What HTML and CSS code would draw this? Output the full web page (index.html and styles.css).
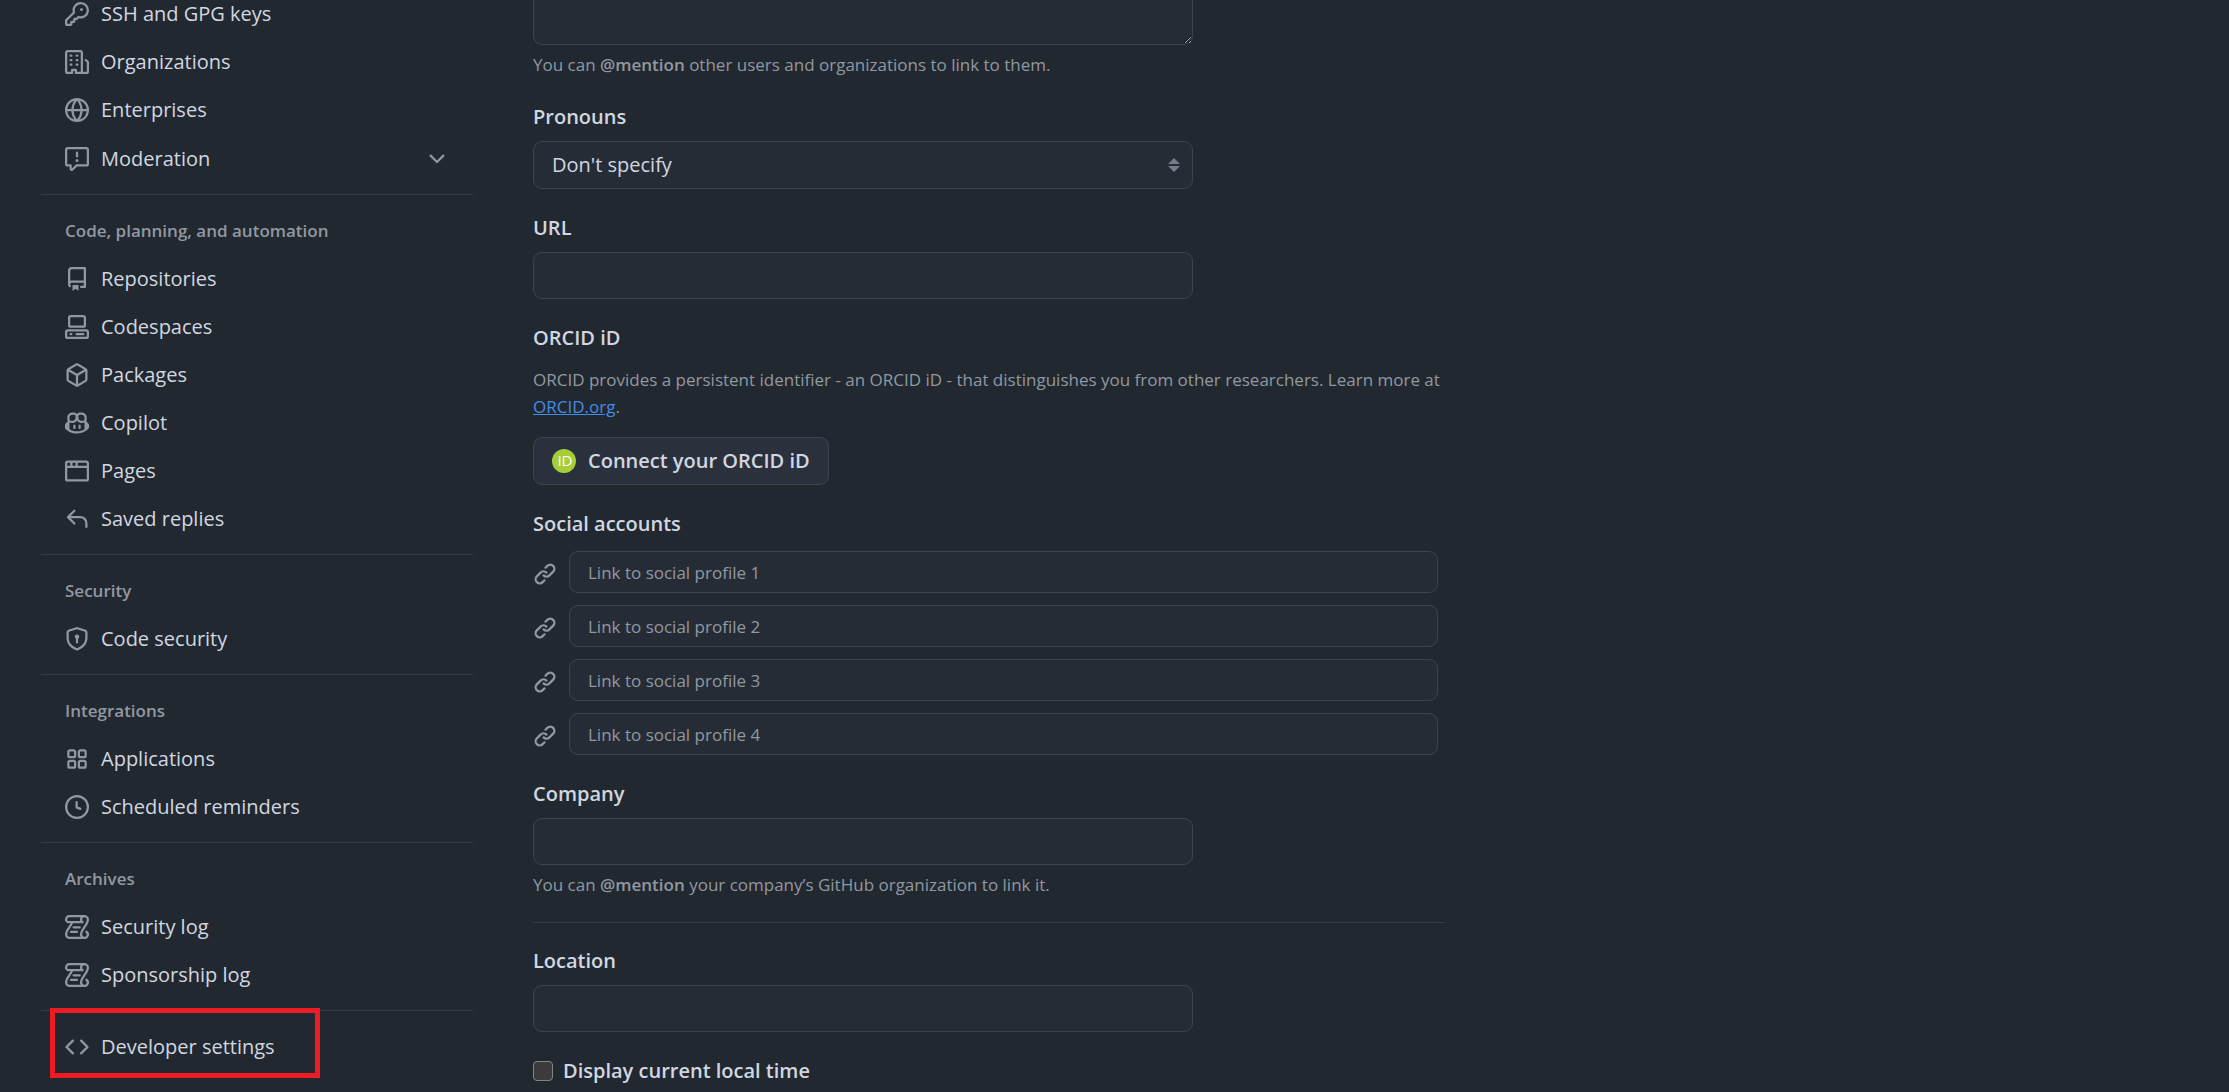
FILE: index.html
```html
<!DOCTYPE html>
<html lang="en">
<head>
<meta charset="utf-8">
<title>Public profile</title>
<meta name="viewport" content="width=device-width, initial-scale=1">
<link rel="stylesheet" href="styles.css">
</head>
<body>
<div class="page">
  <nav class="sidebar" aria-label="Settings">
    <ul class="nav-list">
      <li><a class="nav-item" href="#keys"><svg class="icon" viewBox="0 0 16 16" aria-hidden="true"><path d="M10.5 0a5.499 5.499 0 1 1-1.288 10.848l-.932.932a.749.749 0 0 1-.53.22H7v.75a.749.749 0 0 1-.22.53l-.5.5a.749.749 0 0 1-.53.22H5v.75a.749.749 0 0 1-.22.53l-.5.5a.749.749 0 0 1-.53.22h-2A1.75 1.75 0 0 1 0 14.25v-2c0-.199.079-.389.22-.53l4.932-4.932A5.5 5.5 0 0 1 10.5 0Zm-4 5.5c-.001.431.069.86.205 1.269a.75.75 0 0 1-.181.768L1.5 12.56v1.69c0 .138.112.25.25.25h1.69l.06-.06v-1.19a.75.75 0 0 1 .75-.75h1.19l.06-.06v-1.19a.75.75 0 0 1 .75-.75h1.19l1.023-1.025a.75.75 0 0 1 .768-.18A4 4 0 1 0 6.5 5.5ZM11 6a1 1 0 1 1 0-2 1 1 0 0 1 0 2Z"/></svg>SSH and GPG keys</a></li>
      <li><a class="nav-item" href="#organizations"><svg class="icon" viewBox="0 0 16 16" aria-hidden="true"><path d="M1.75 16A1.75 1.75 0 0 1 0 14.25V1.75C0 .784.784 0 1.75 0h8.5C11.216 0 12 .784 12 1.75v12.5c0 .085-.006.168-.018.25h2.268a.25.25 0 0 0 .25-.25V8.285a.25.25 0 0 0-.111-.208l-1.055-.703a.749.749 0 1 1 .832-1.248l1.055.703c.487.325.779.871.779 1.456v5.965A1.75 1.75 0 0 1 14.25 16h-3.5a.766.766 0 0 1-.197-.026c-.099.017-.2.026-.303.026h-3a.75.75 0 0 1-.75-.75V14h-1v1.25a.75.75 0 0 1-.75.75Zm-.25-1.75c0 .138.112.25.25.25H4v-1.25a.75.75 0 0 1 .75-.75h2.5a.75.75 0 0 1 .75.75v1.25h2.25a.25.25 0 0 0 .25-.25V1.75a.25.25 0 0 0-.25-.25h-8.5a.25.25 0 0 0-.25.25ZM3.75 6h.5a.75.75 0 0 1 0 1.5h-.5a.75.75 0 0 1 0-1.5ZM3 3.75A.75.75 0 0 1 3.75 3h.5a.75.75 0 0 1 0 1.5h-.5A.75.75 0 0 1 3 3.75Zm4 3A.75.75 0 0 1 7.75 6h.5a.75.75 0 0 1 0 1.5h-.5A.75.75 0 0 1 7 6.75ZM7.75 3h.5a.75.75 0 0 1 0 1.5h-.5a.75.75 0 0 1 0-1.5ZM3 9.75A.75.75 0 0 1 3.75 9h.5a.75.75 0 0 1 0 1.5h-.5A.75.75 0 0 1 3 9.75ZM7.75 9h.5a.75.75 0 0 1 0 1.5h-.5a.75.75 0 0 1 0-1.5Z"/></svg>Organizations</a></li>
      <li><a class="nav-item" href="#enterprises"><svg class="icon" viewBox="0 0 16 16" aria-hidden="true"><path d="M8 0a8 8 0 1 1 0 16A8 8 0 0 1 8 0ZM5.78 8.75a9.64 9.64 0 0 0 1.363 4.177c.255.426.542.832.857 1.215.245-.296.551-.705.857-1.215A9.64 9.64 0 0 0 10.22 8.75Zm4.44-1.5a9.64 9.64 0 0 0-1.363-4.177c-.307-.51-.612-.919-.857-1.215a9.927 9.927 0 0 0-.857 1.215A9.64 9.64 0 0 0 5.78 7.25Zm-5.944 1.5H1.543a6.507 6.507 0 0 0 4.666 5.5c-.123-.181-.24-.365-.352-.552-.715-1.192-1.437-2.874-1.581-4.948Zm-2.733-1.5h2.733c.144-2.074.866-3.756 1.58-4.948.12-.197.237-.381.353-.552a6.507 6.507 0 0 0-4.666 5.5Zm10.181 1.5c-.144 2.074-.866 3.756-1.58 4.948-.12.197-.237.381-.353.552a6.507 6.507 0 0 0 4.666-5.5Zm2.733-1.5a6.507 6.507 0 0 0-4.666-5.5c.123.181.24.365.353.552.714 1.192 1.436 2.874 1.58 4.948Z"/></svg>Enterprises</a></li>
      <li><button class="nav-item nav-toggle" type="button" aria-expanded="false"><svg class="icon" viewBox="0 0 16 16" aria-hidden="true"><path d="M0 1.75C0 .784.784 0 1.75 0h12.5C15.216 0 16 .784 16 1.75v9.5A1.75 1.75 0 0 1 14.25 13H8.06l-2.573 2.573A1.458 1.458 0 0 1 3 14.543V13H1.75A1.75 1.75 0 0 1 0 11.25Zm1.75-.25a.25.25 0 0 0-.25.25v9.5c0 .138.112.25.25.25h2a.75.75 0 0 1 .75.75v2.19l2.72-2.72a.749.749 0 0 1 .53-.22h6.5a.25.25 0 0 0 .25-.25v-9.5a.25.25 0 0 0-.25-.25Zm7 2.25v2.5a.75.75 0 0 1-1.5 0v-2.5a.75.75 0 0 1 1.5 0ZM9 9a1 1 0 1 1-2 0 1 1 0 0 1 2 0Z"/></svg>Moderation<svg class="icon chevron" viewBox="0 0 16 16" aria-hidden="true"><path d="M12.78 5.22a.749.749 0 0 1 0 1.06l-4.25 4.25a.749.749 0 0 1-1.06 0L3.22 6.28a.749.749 0 1 1 1.06-1.06L8 8.939l3.72-3.719a.749.749 0 0 1 1.06 0Z"/></svg></button></li>
    </ul>

    <section class="nav-group">
      <h2 class="nav-heading">Code, planning, and automation</h2>
      <ul class="nav-list">
        <li><a class="nav-item" href="#repositories"><svg class="icon" viewBox="0 0 16 16" aria-hidden="true"><path d="M2 2.5A2.5 2.5 0 0 1 4.5 0h8.75a.75.75 0 0 1 .75.75v12.5a.75.75 0 0 1-.75.75h-2.5a.75.75 0 0 1 0-1.5h1.75v-2h-8a1 1 0 0 0-.714 1.7.75.75 0 1 1-1.072 1.05A2.495 2.495 0 0 1 2 11.5Zm10.5-1h-8a1 1 0 0 0-1 1v6.708A2.486 2.486 0 0 1 4.5 9h8ZM5 12.25a.25.25 0 0 1 .25-.25h3.5a.25.25 0 0 1 .25.25v3.25a.25.25 0 0 1-.4.2l-1.45-1.087a.249.249 0 0 0-.3 0L5.4 15.7a.25.25 0 0 1-.4-.2Z"/></svg>Repositories</a></li>
        <li><a class="nav-item" href="#codespaces"><svg class="icon" viewBox="0 0 16 16" aria-hidden="true"><path d="M0 11.25c0-.966.784-1.75 1.75-1.75h12.5c.966 0 1.75.784 1.75 1.75v3A1.75 1.75 0 0 1 14.25 16H1.75A1.75 1.75 0 0 1 0 14.25Zm2-9.5C2 .784 2.784 0 3.75 0h8.5C13.216 0 14 .784 14 1.75v5a1.75 1.75 0 0 1-1.75 1.75h-8.5A1.75 1.75 0 0 1 2 6.75Zm1.75-.25a.25.25 0 0 0-.25.25v5c0 .138.112.25.25.25h8.5a.25.25 0 0 0 .25-.25v-5a.25.25 0 0 0-.25-.25Zm-2 9.5a.25.25 0 0 0-.25.25v3c0 .138.112.25.25.25h12.5a.25.25 0 0 0 .25-.25v-3a.25.25 0 0 0-.25-.25Z"/><path d="M7 12.75a.75.75 0 0 1 .75-.75h4.5a.75.75 0 0 1 0 1.5h-4.5a.75.75 0 0 1-.75-.75Zm-4 0a.75.75 0 0 1 .75-.75h.5a.75.75 0 0 1 0 1.5h-.5a.75.75 0 0 1-.75-.75Z"/></svg>Codespaces</a></li>
        <li><a class="nav-item" href="#packages"><svg class="icon" viewBox="0 0 16 16" aria-hidden="true"><path d="m8.878.392 5.25 3.045c.54.314.872.89.872 1.514v6.098a1.75 1.75 0 0 1-.872 1.514l-5.25 3.045a1.75 1.75 0 0 1-1.756 0l-5.25-3.045A1.75 1.75 0 0 1 1 11.049V4.951c0-.624.332-1.201.872-1.514L7.122.392a1.75 1.75 0 0 1 1.756 0ZM7.875 1.69l-4.63 2.685L8 7.133l4.755-2.758-4.63-2.685a.248.248 0 0 0-.25 0ZM2.5 5.677v5.372c0 .09.047.171.125.216l4.625 2.683V8.432Zm6.25 8.271 4.625-2.683a.25.25 0 0 0 .125-.216V5.677L8.75 8.432Z"/></svg>Packages</a></li>
        <li><a class="nav-item" href="#copilot"><svg class="icon" viewBox="0 0 16 16" aria-hidden="true"><path d="M7.998 15.035c-4.562 0-7.873-2.914-7.998-3.749V9.338c.085-.628.677-1.686 1.588-2.065.013-.07.024-.143.036-.218.029-.183.06-.384.126-.612-.201-.508-.254-1.084-.254-1.656 0-.87.128-1.769.693-2.484.579-.733 1.494-1.124 2.724-1.261 1.206-.134 2.262.034 2.944.765.05.053.096.108.139.165.044-.057.094-.112.143-.165.682-.731 1.738-.899 2.944-.765 1.23.137 2.145.528 2.724 1.261.566.715.693 1.614.693 2.484 0 .572-.053 1.148-.254 1.656.066.228.098.429.126.612.012.076.024.148.037.218.924.385 1.522 1.471 1.591 2.095v1.872c0 .766-3.351 3.795-8.002 3.795Zm0-1.485c2.28 0 4.584-1.11 5.002-1.433V7.862l-.023-.116c-.49.21-1.075.291-1.727.291-1.146 0-2.059-.327-2.71-.991A3.222 3.222 0 0 1 8 6.303a3.24 3.24 0 0 1-.544.743c-.65.664-1.563.991-2.71.991-.652 0-1.236-.081-1.727-.291l-.023.116v4.255c.419.323 2.722 1.433 5.002 1.433ZM6.762 2.83c-.193-.206-.637-.413-1.682-.297-1.019.113-1.479.404-1.713.7-.247.312-.369.789-.369 1.554 0 .793.129 1.171.308 1.371.162.181.519.379 1.442.379.853 0 1.339-.235 1.638-.54.315-.322.527-.827.617-1.553.117-.935-.037-1.395-.241-1.614Zm4.155-.297c-1.044-.116-1.488.091-1.681.297-.204.219-.359.679-.242 1.614.091.726.303 1.231.618 1.553.299.305.784.54 1.638.54.922 0 1.28-.198 1.442-.379.179-.2.308-.578.308-1.371 0-.765-.123-1.242-.37-1.554-.233-.296-.693-.587-1.713-.7Z"/><path d="M6.25 9.037a.75.75 0 0 1 .75.75v1.501a.75.75 0 0 1-1.5 0V9.787a.75.75 0 0 1 .75-.75Zm4.25.75v1.501a.75.75 0 0 1-1.5 0V9.787a.75.75 0 0 1 1.5 0Z"/></svg>Copilot</a></li>
        <li><a class="nav-item" href="#pages"><svg class="icon" viewBox="0 0 16 16" aria-hidden="true"><path d="M0 2.75C0 1.784.784 1 1.75 1h12.5c.966 0 1.75.784 1.75 1.75v10.5A1.75 1.75 0 0 1 14.25 15H1.75A1.75 1.75 0 0 1 0 13.25ZM14.5 6h-13v7.25c0 .138.112.25.25.25h12.5a.25.25 0 0 0 .25-.25Zm-6-3.5v2h6V2.75a.25.25 0 0 0-.25-.25ZM5 2.5v2h2v-2Zm-3.25 0a.25.25 0 0 0-.25.25V4.5h2v-2Z"/></svg>Pages</a></li>
        <li><a class="nav-item" href="#replies"><svg class="icon" viewBox="0 0 16 16" aria-hidden="true"><path d="M6.78 1.97a.75.75 0 0 1 0 1.06L3.81 6h6.44A4.75 4.75 0 0 1 15 10.75v2.5a.75.75 0 0 1-1.5 0v-2.5a3.25 3.25 0 0 0-3.25-3.25H3.81l2.97 2.97a.749.749 0 0 1-.326 1.275.749.749 0 0 1-.734-.215L1.47 7.28a.75.75 0 0 1 0-1.06l4.25-4.25a.75.75 0 0 1 1.06 0Z"/></svg>Saved replies</a></li>
      </ul>
    </section>

    <section class="nav-group">
      <h2 class="nav-heading">Security</h2>
      <ul class="nav-list">
        <li><a class="nav-item" href="#security"><svg class="icon" viewBox="0 0 16 16" aria-hidden="true"><path d="m8.533.133 5.25 1.68A1.75 1.75 0 0 1 15 3.48V7c0 1.566-.32 3.182-1.303 4.682-.983 1.498-2.585 2.813-5.032 3.855a1.697 1.697 0 0 1-1.33 0c-2.447-1.042-4.049-2.357-5.032-3.855C1.32 10.182 1 8.566 1 7V3.48a1.755 1.755 0 0 1 1.217-1.667l5.25-1.68a1.748 1.748 0 0 1 1.066 0Zm-.61 1.429.001.001-5.25 1.68a.251.251 0 0 0-.174.237V7c0 1.36.275 2.666 1.057 3.859.784 1.194 2.121 2.342 4.366 3.298a.196.196 0 0 0 .154 0c2.245-.957 3.582-2.103 4.366-3.297C13.225 9.666 13.5 8.358 13.5 7V3.48a.25.25 0 0 0-.174-.238l-5.25-1.68a.25.25 0 0 0-.153 0ZM9.5 6.5c0 .536-.286 1.032-.75 1.3v2.45a.75.75 0 0 1-1.5 0V7.8A1.5 1.5 0 1 1 9.5 6.5Z"/></svg>Code security</a></li>
      </ul>
    </section>

    <section class="nav-group">
      <h2 class="nav-heading">Integrations</h2>
      <ul class="nav-list">
        <li><a class="nav-item" href="#applications"><svg class="icon" viewBox="0 0 16 16" aria-hidden="true"><path d="M1.5 3.25c0-.966.784-1.75 1.75-1.75h2.5c.966 0 1.75.784 1.75 1.75v2.5A1.75 1.75 0 0 1 5.75 7.5h-2.5A1.75 1.75 0 0 1 1.5 5.75Zm7 0c0-.966.784-1.75 1.75-1.75h2.5c.966 0 1.75.784 1.75 1.75v2.5a1.75 1.75 0 0 1-1.75 1.75h-2.5A1.75 1.75 0 0 1 8.5 5.75Zm-7 7c0-.966.784-1.75 1.75-1.75h2.5c.966 0 1.75.784 1.75 1.75v2.5a1.75 1.75 0 0 1-1.75 1.75h-2.5a1.75 1.75 0 0 1-1.75-1.75Zm7 0c0-.966.784-1.75 1.75-1.75h2.5c.966 0 1.75.784 1.75 1.75v2.5a1.75 1.75 0 0 1-1.75 1.75h-2.5a1.75 1.75 0 0 1-1.75-1.75ZM3.25 3a.25.25 0 0 0-.25.25v2.5c0 .138.112.25.25.25h2.5A.25.25 0 0 0 6 5.75v-2.5A.25.25 0 0 0 5.75 3Zm7 0a.25.25 0 0 0-.25.25v2.5c0 .138.112.25.25.25h2.5a.25.25 0 0 0 .25-.25v-2.5a.25.25 0 0 0-.25-.25Zm-7 7a.25.25 0 0 0-.25.25v2.5c0 .138.112.25.25.25h2.5a.25.25 0 0 0 .25-.25v-2.5a.25.25 0 0 0-.25-.25Zm7 0a.25.25 0 0 0-.25.25v2.5c0 .138.112.25.25.25h2.5a.25.25 0 0 0 .25-.25v-2.5a.25.25 0 0 0-.25-.25Z"/></svg>Applications</a></li>
        <li><a class="nav-item" href="#reminders"><svg class="icon" viewBox="0 0 16 16" aria-hidden="true"><path d="M8 0a8 8 0 1 1 0 16A8 8 0 0 1 8 0ZM1.5 8a6.5 6.5 0 1 0 13 0 6.5 6.5 0 0 0-13 0Zm7-3.25v2.992l2.028.812a.75.75 0 0 1-.557 1.392l-2.5-1A.751.751 0 0 1 7 8.25v-3.5a.75.75 0 0 1 1.5 0Z"/></svg>Scheduled reminders</a></li>
      </ul>
    </section>

    <section class="nav-group">
      <h2 class="nav-heading">Archives</h2>
      <ul class="nav-list">
        <li><a class="nav-item" href="#security-log"><svg class="icon" viewBox="0 0 16 16" aria-hidden="true"><path d="M5 8.25a.75.75 0 0 1 .75-.75h4a.75.75 0 0 1 0 1.5h-4A.75.75 0 0 1 5 8.25ZM4 10.5A.75.75 0 0 0 4 12h4a.75.75 0 0 0 0-1.5H4Z"/><path d="M13-.005c1.654 0 3 1.328 3 3 0 .982-.338 1.933-.783 2.818-.443.879-1.028 1.758-1.582 2.588l-.011.017c-.568.853-1.104 1.659-1.501 2.446-.398.789-.623 1.494-.623 2.136a1.5 1.5 0 1 0 2.333-1.248.75.75 0 0 1 .834-1.246A3 3 0 0 1 13 16H3a3 3 0 0 1-3-3c0-1.582.891-3.135 1.777-4.506.209-.322.418-.637.623-.946.473-.709.923-1.386 1.287-2.048H2.51c-.576 0-1.381-.133-1.907-.783A2.68 2.68 0 0 1 0 2.995a3 3 0 0 1 3-3Zm0 1.5a1.5 1.5 0 0 0-1.5 1.5c0 .476.223.834.667 1.132A.75.75 0 0 1 11.75 5.5H5.368c-.467 1.003-1.141 2.015-1.773 2.963-.192.289-.381.571-.558.845C2.13 10.711 1.5 11.916 1.5 13A1.5 1.5 0 0 0 3 14.5h7.401A2.989 2.989 0 0 1 10 13c0-.979.338-1.928.784-2.812.441-.874 1.023-1.748 1.575-2.576l.017-.026c.568-.853 1.103-1.658 1.501-2.448.398-.79.623-1.497.623-2.143 0-.838-.669-1.5-1.5-1.5Zm-10 0a1.5 1.5 0 0 0-1.5 1.5c0 .321.1.569.27.778.097.12.325.227.74.227h7.674A2.737 2.737 0 0 1 10 2.995c0-.546.146-1.059.401-1.5Z"/></svg>Security log</a></li>
        <li><a class="nav-item" href="#sponsorship-log"><svg class="icon" viewBox="0 0 16 16" aria-hidden="true"><path d="M5 8.25a.75.75 0 0 1 .75-.75h4a.75.75 0 0 1 0 1.5h-4A.75.75 0 0 1 5 8.25ZM4 10.5A.75.75 0 0 0 4 12h4a.75.75 0 0 0 0-1.5H4Z"/><path d="M13-.005c1.654 0 3 1.328 3 3 0 .982-.338 1.933-.783 2.818-.443.879-1.028 1.758-1.582 2.588l-.011.017c-.568.853-1.104 1.659-1.501 2.446-.398.789-.623 1.494-.623 2.136a1.5 1.5 0 1 0 2.333-1.248.75.75 0 0 1 .834-1.246A3 3 0 0 1 13 16H3a3 3 0 0 1-3-3c0-1.582.891-3.135 1.777-4.506.209-.322.418-.637.623-.946.473-.709.923-1.386 1.287-2.048H2.51c-.576 0-1.381-.133-1.907-.783A2.68 2.68 0 0 1 0 2.995a3 3 0 0 1 3-3Zm0 1.5a1.5 1.5 0 0 0-1.5 1.5c0 .476.223.834.667 1.132A.75.75 0 0 1 11.75 5.5H5.368c-.467 1.003-1.141 2.015-1.773 2.963-.192.289-.381.571-.558.845C2.13 10.711 1.5 11.916 1.5 13A1.5 1.5 0 0 0 3 14.5h7.401A2.989 2.989 0 0 1 10 13c0-.979.338-1.928.784-2.812.441-.874 1.023-1.748 1.575-2.576l.017-.026c.568-.853 1.103-1.658 1.501-2.448.398-.79.623-1.497.623-2.143 0-.838-.669-1.5-1.5-1.5Zm-10 0a1.5 1.5 0 0 0-1.5 1.5c0 .321.1.569.27.778.097.12.325.227.74.227h7.674A2.737 2.737 0 0 1 10 2.995c0-.546.146-1.059.401-1.5Z"/></svg>Sponsorship log</a></li>
      </ul>
    </section>

    <section class="nav-group nav-group-plain">
      <ul class="nav-list">
        <li class="highlighted"><a class="nav-item" href="#developer"><svg class="icon" viewBox="0 0 16 16" aria-hidden="true"><path d="m11.28 3.22 4.25 4.25a.75.75 0 0 1 0 1.06l-4.25 4.25a.749.749 0 0 1-1.275-.326.749.749 0 0 1 .215-.734L13.94 8l-3.72-3.72a.749.749 0 0 1 .326-1.275.749.749 0 0 1 .734.215Zm-6.56 0a.751.751 0 0 1 1.042.018.751.751 0 0 1 .018 1.042L2.06 8l3.72 3.72a.749.749 0 0 1-.326 1.275.749.749 0 0 1-.734-.215L.47 8.53a.75.75 0 0 1 0-1.06Z"/></svg>Developer settings</a></li>
      </ul>
    </section>
  </nav>

  <main class="content">
    <form class="profile-form">
      <div class="field">
        <textarea class="control bio" aria-label="Bio"></textarea>
        <p class="note">You can <strong>@mention</strong> other users and organizations to link to them.</p>
      </div>

      <div class="field">
        <label class="label" for="pronouns">Pronouns</label>
        <select class="control select" id="pronouns"><option>Don't specify</option></select>
      </div>

      <div class="field">
        <label class="label" for="url">URL</label>
        <input class="control" type="url" id="url">
      </div>

      <div class="field">
        <h2 class="label">ORCID iD</h2>
        <p class="description">ORCID provides a persistent identifier - an ORCID iD - that distinguishes you from other researchers. Learn more at <a class="link" href="#orcid">ORCID.org</a>.</p>
        <button class="button" type="button"><svg class="icon" viewBox="0 0 24 24" aria-hidden="true"><circle cx="12" cy="12" r="12" fill="#a6ce39"/><text class="orcid-mark" x="13" y="17" text-anchor="middle">iD</text></svg>Connect your ORCID iD</button>
      </div>

      <div class="field">
        <h2 class="label">Social accounts</h2>
        <ul class="social-list">
          <li class="social-row"><svg class="icon" viewBox="0 0 16 16" aria-hidden="true"><path d="m7.775 3.275 1.25-1.25a3.5 3.5 0 1 1 4.95 4.95l-2.5 2.5a3.5 3.5 0 0 1-4.95 0 .751.751 0 0 1 .018-1.042.751.751 0 0 1 1.042-.018 1.998 1.998 0 0 0 2.83 0l2.5-2.5a2.002 2.002 0 0 0-2.83-2.83l-1.25 1.25a.751.751 0 0 1-1.042-.018.751.751 0 0 1-.018-1.042Zm-4.69 9.64a1.998 1.998 0 0 0 2.83 0l1.25-1.25a.751.751 0 0 1 1.042.018.751.751 0 0 1 .018 1.042l-1.25 1.25a3.5 3.5 0 1 1-4.95-4.95l2.5-2.5a3.5 3.5 0 0 1 4.95 0 .751.751 0 0 1-.018 1.042.751.751 0 0 1-1.042.018 1.998 1.998 0 0 0-2.83 0l-2.5 2.5a1.998 1.998 0 0 0 0 2.83Z"/></svg><input class="control control-small" type="text" placeholder="Link to social profile 1" aria-label="Link to social profile 1"></li>
          <li class="social-row"><svg class="icon" viewBox="0 0 16 16" aria-hidden="true"><path d="m7.775 3.275 1.25-1.25a3.5 3.5 0 1 1 4.95 4.95l-2.5 2.5a3.5 3.5 0 0 1-4.95 0 .751.751 0 0 1 .018-1.042.751.751 0 0 1 1.042-.018 1.998 1.998 0 0 0 2.83 0l2.5-2.5a2.002 2.002 0 0 0-2.83-2.83l-1.25 1.25a.751.751 0 0 1-1.042-.018.751.751 0 0 1-.018-1.042Zm-4.69 9.64a1.998 1.998 0 0 0 2.83 0l1.25-1.25a.751.751 0 0 1 1.042.018.751.751 0 0 1 .018 1.042l-1.25 1.25a3.5 3.5 0 1 1-4.95-4.95l2.5-2.5a3.5 3.5 0 0 1 4.95 0 .751.751 0 0 1-.018 1.042.751.751 0 0 1-1.042.018 1.998 1.998 0 0 0-2.83 0l-2.5 2.5a1.998 1.998 0 0 0 0 2.83Z"/></svg><input class="control control-small" type="text" placeholder="Link to social profile 2" aria-label="Link to social profile 2"></li>
          <li class="social-row"><svg class="icon" viewBox="0 0 16 16" aria-hidden="true"><path d="m7.775 3.275 1.25-1.25a3.5 3.5 0 1 1 4.95 4.95l-2.5 2.5a3.5 3.5 0 0 1-4.95 0 .751.751 0 0 1 .018-1.042.751.751 0 0 1 1.042-.018 1.998 1.998 0 0 0 2.83 0l2.5-2.5a2.002 2.002 0 0 0-2.83-2.83l-1.25 1.25a.751.751 0 0 1-1.042-.018.751.751 0 0 1-.018-1.042Zm-4.69 9.64a1.998 1.998 0 0 0 2.83 0l1.25-1.25a.751.751 0 0 1 1.042.018.751.751 0 0 1 .018 1.042l-1.25 1.25a3.5 3.5 0 1 1-4.95-4.95l2.5-2.5a3.5 3.5 0 0 1 4.95 0 .751.751 0 0 1-.018 1.042.751.751 0 0 1-1.042.018 1.998 1.998 0 0 0-2.83 0l-2.5 2.5a1.998 1.998 0 0 0 0 2.83Z"/></svg><input class="control control-small" type="text" placeholder="Link to social profile 3" aria-label="Link to social profile 3"></li>
          <li class="social-row"><svg class="icon" viewBox="0 0 16 16" aria-hidden="true"><path d="m7.775 3.275 1.25-1.25a3.5 3.5 0 1 1 4.95 4.95l-2.5 2.5a3.5 3.5 0 0 1-4.95 0 .751.751 0 0 1 .018-1.042.751.751 0 0 1 1.042-.018 1.998 1.998 0 0 0 2.83 0l2.5-2.5a2.002 2.002 0 0 0-2.83-2.83l-1.25 1.25a.751.751 0 0 1-1.042-.018.751.751 0 0 1-.018-1.042Zm-4.69 9.64a1.998 1.998 0 0 0 2.83 0l1.25-1.25a.751.751 0 0 1 1.042.018.751.751 0 0 1 .018 1.042l-1.25 1.25a3.5 3.5 0 1 1-4.95-4.95l2.5-2.5a3.5 3.5 0 0 1 4.95 0 .751.751 0 0 1-.018 1.042.751.751 0 0 1-1.042.018 1.998 1.998 0 0 0-2.83 0l-2.5 2.5a1.998 1.998 0 0 0 0 2.83Z"/></svg><input class="control control-small" type="text" placeholder="Link to social profile 4" aria-label="Link to social profile 4"></li>
        </ul>
      </div>

      <div class="field">
        <label class="label" for="company">Company</label>
        <input class="control" type="text" id="company">
        <p class="note">You can <strong>@mention</strong> your company’s GitHub organization to link it.</p>
      </div>

      <hr class="rule">

      <div class="field">
        <label class="label" for="location">Location</label>
        <input class="control" type="text" id="location">
      </div>

      <div class="check-row">
        <input class="checkbox" type="checkbox" id="local-time">
        <label class="check-label" for="local-time">Display current local time</label>
      </div>
    </form>
  </main>
</div>
</body>
</html>
```
FILE: styles.css
```css
:root {
  color-scheme: dark;
  --bg: #212830;
  --control-bg: #262c36;
  --button-bg: #2a313c;
  --border: #3d444d;
  --divider: #353c44;
  --text: #d1d7e0;
  --muted: #9198a1;
  --link: #478be6;
  --mark: #ed1c24;
  --font: "Open Sans", "Noto Sans", sans-serif;
}

*,
*::after {
  box-sizing: border-box;
}

body {
  display: flow-root;
  min-height: 100vh;
  margin: 0;
  background: var(--bg);
  color: var(--text);
  font: 20px/30px var(--font);
}

h2,
p,
ul {
  margin: 0;
  padding: 0;
}

ul {
  list-style: none;
}

/* The page is scrolled: its first rows start just above the window. */
.page {
  display: flex;
  gap: 60px;
  margin-top: -10px;
  padding: 0 41px;
}

.sidebar {
  flex: 0 0 432px;
}

.content {
  flex: 1;
  min-width: 0;
  max-width: 912px;
}

.icon {
  flex: none;
  width: 24px;
  height: 24px;
  fill: var(--muted);
}

/* Sidebar */

.nav-item {
  display: flex;
  align-items: center;
  gap: 12px;
  width: 100%;
  padding: 9px 24px;
  border: 0;
  background: none;
  color: inherit;
  font: inherit;
  text-align: left;
  text-decoration: none;
}

.nav-toggle {
  margin-top: 1px;
}

.chevron {
  margin-left: auto;
}

.nav-group {
  margin-top: 11px;
  border-top: 1px solid var(--divider);
}

.nav-group-plain {
  padding-top: 12px;
}

.nav-heading {
  padding: 22px 24px 11px;
  color: var(--muted);
  font-size: 17px;
  font-weight: 600;
  line-height: 27px;
}

.highlighted {
  position: relative;
}

.highlighted::after {
  content: "";
  position: absolute;
  top: -15px;
  left: 9px;
  width: 270px;
  height: 70px;
  border: 5px solid var(--mark);
  pointer-events: none;
}

/* Profile form */

.field {
  margin-bottom: 24px;
}

.label {
  display: block;
  margin-bottom: 9px;
  font-size: 20px;
  font-weight: 600;
  line-height: 30px;
}

.control {
  display: block;
  width: 100%;
  max-width: 660px;
  height: 47px;
  padding: 0 18px;
  border: 1px solid var(--border);
  border-radius: 9px;
  background-color: var(--control-bg);
  color: var(--text);
  font: 20px/30px var(--font);
}

.bio {
  height: 55px;
  border-top: 0;
  border-radius: 0 0 9px 9px;
  resize: vertical;
}

.select {
  height: 48px;
  appearance: none;
  background-image: url("data:image/svg+xml,%3Csvg xmlns='http://www.w3.org/2000/svg' width='12' height='16' fill='%23767d88'%3E%3Cpath d='M6 1l6 6H0zM6 15l6-6H0z'/%3E%3C/svg%3E");
  background-repeat: no-repeat;
  background-position: right 12px center;
}

.control-small {
  max-width: none;
  height: 42px;
  font-size: 17px;
}

.control::placeholder {
  color: var(--muted);
  opacity: 1;
}

.note,
.description {
  color: var(--muted);
  font-size: 17px;
  line-height: 27px;
}

.note {
  margin-top: 6px;
}

.note strong {
  font-weight: 600;
}

.description {
  margin: 13px 0 17px;
}

.link {
  color: var(--link);
}

.button {
  display: flex;
  align-items: center;
  gap: 12px;
  height: 48px;
  padding: 0 18px;
  border: 1px solid var(--border);
  border-radius: 9px;
  background: var(--button-bg);
  color: var(--text);
  font: 600 20px/30px var(--font);
}

.orcid-mark {
  fill: #fff;
  font-size: 15px;
  font-weight: 400;
}

.social-list {
  display: grid;
  gap: 12px;
  margin-top: 12px;
  padding-right: 7px;
}

.social-row {
  display: flex;
  align-items: center;
  gap: 12px;
}

.social-row .icon {
  margin-top: 4px;
}

.rule {
  height: 1px;
  margin: 0 0 23px;
  border: 0;
  background: var(--divider);
}

.check-row {
  display: flex;
  align-items: center;
  gap: 10px;
}

.checkbox {
  appearance: none;
  width: 20px;
  height: 20px;
  margin: 0;
  border: 1px solid #858585;
  border-radius: 4px;
  background: #3b3b3b;
}

.check-label {
  font-weight: 600;
}
```
